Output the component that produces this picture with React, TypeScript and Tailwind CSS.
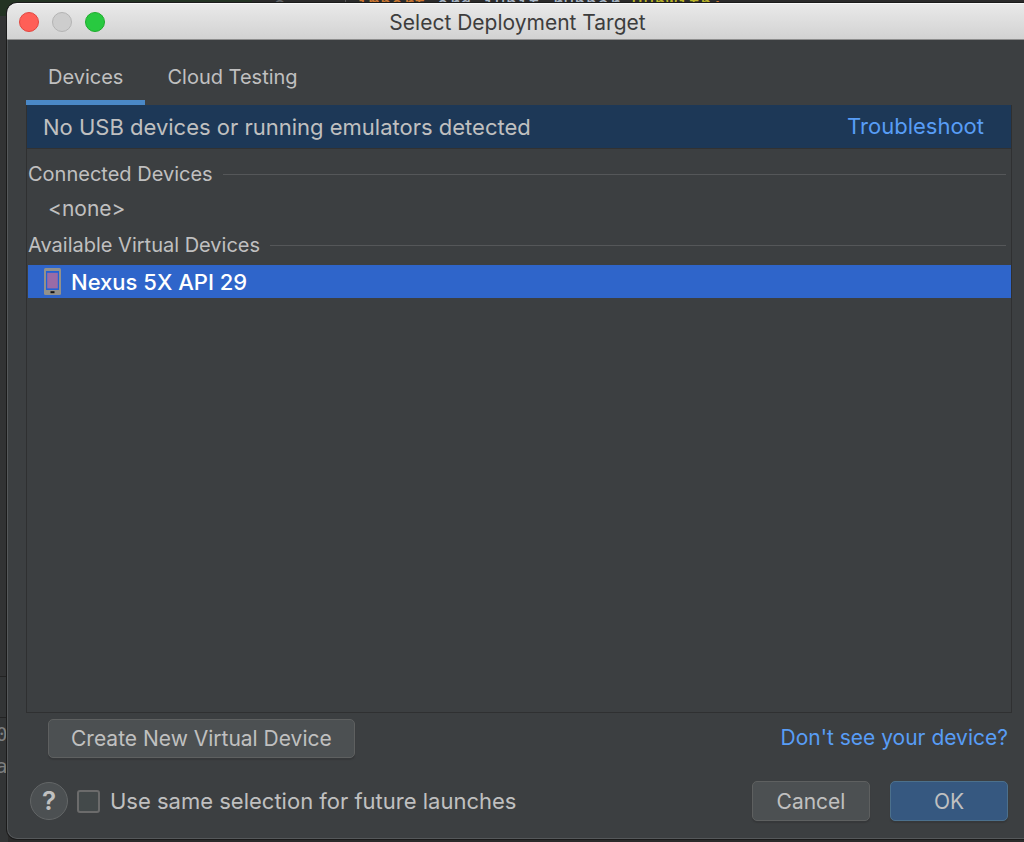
import { useState } from "react";

function SectionHeading({ title }: { title: string }) {
  return (
    <h2 className="flex items-center gap-[10px] pr-[5px] text-xl leading-6">
      {title}
      <span className="h-px flex-1 bg-[#555759]" />
    </h2>
  );
}

function PhoneIcon() {
  return (
    <svg width="17" height="27" viewBox="0 0 17 27" aria-hidden="true">
      <rect width="17" height="27" rx="1.5" fill="#93918b" />
      <rect x="2" y="3" width="13" height="19" fill="#2462d4" />
      <rect x="3.2" y="4.8" width="10.6" height="15.6" fill="#9a6ba6" />
      <rect x="6.5" y="23.2" width="4" height="2" fill="#111" />
    </svg>
  );
}

function EditorBackdrop() {
  return (
    <div
      aria-hidden="true"
      className="absolute inset-0 overflow-hidden bg-[#2b2b2b] font-['DejaVu_Sans_Mono',monospace] text-[19px] leading-6"
    >
      <div className="absolute top-0 left-0 h-4 w-[252px] bg-[#233323]" />
      <div className="absolute top-4 left-0 h-[660px] w-2 bg-[#323334]" />
      <div className="absolute top-[676px] left-0 h-[166px] w-2 border-t border-[#232323] bg-[#333536]" />
      <div className="absolute top-[717px] left-0 h-px w-2 bg-[#232323]" />
      <span className="absolute top-[-5px] left-[274px] text-[#606366]">8</span>
      <div className="absolute top-0 left-[345px] h-4 w-px bg-[#555]" />
      <div className="absolute top-[-8px] left-[357px] whitespace-pre text-[#a9b7c6]">
        <span className="text-[#cc7832]">import</span> org.junit.runner.
        <span className="text-[#bbb529]">RunWith</span>
        <span className="text-[#cc7832]">;</span>
      </div>
      <span className="absolute top-[722px] left-[-4px] text-[#7d7f80]">0</span>
      <span className="absolute top-[754px] left-[-4px] text-[#7d7f80]">a</span>
    </div>
  );
}

export default function App() {
  const [tab, setTab] = useState("Devices");
  const [same, setSame] = useState(false);
  return (
    <div className="relative h-screen min-h-[480px] overflow-hidden pt-[3px] pb-[3px] pl-[7px] font-[Inter,'Liberation_Sans',sans-serif] text-[#c0c0c0]">
      <EditorBackdrop />
      <main className="relative flex h-full flex-col rounded-l-[10px] border-b border-l border-[#55585a] bg-[#3c3f41] shadow-[0_0_0_1px_#1b1b1b]">
        <header className="-ml-px flex h-[37px] shrink-0 items-center rounded-tl-[10px] border-t border-b border-t-[#f8f8f8] border-b-[#8e8e8e] bg-linear-to-b from-[#e9e9e9] to-[#d2d2d2] pr-2 pl-3">
          <div className="flex flex-1 gap-[13px]">
            <button aria-label="Close" className="size-5 rounded-full border border-[#e2463f] bg-[#ff5f57]" />
            <button aria-label="Minimize" disabled className="size-5 rounded-full border border-[#b4b4b4] bg-[#cdcdcd]" />
            <button aria-label="Zoom" className="size-5 rounded-full border border-[#1dad2b] bg-[#28c940]" />
          </div>
          <h1 className="pt-0.5 text-[21px] leading-6 text-[#3d3d3d]">Select Deployment Target</h1>
          <div className="flex-1" />
        </header>

        <div className="flex min-h-0 flex-1 flex-col pr-3 pl-[18px]">
          <nav role="tablist" className="flex h-[65px] shrink-0 text-xl leading-6">
            {["Devices", "Cloud Testing"].map((name) => (
              <button
                key={name}
                role="tab"
                aria-selected={tab === name}
                onClick={() => setTab(name)}
                className={
                  tab === name
                    ? "border-b-[5px] border-[#4a88c7] px-[22px] pt-[14px]"
                    : "border-b-[5px] border-transparent px-[22px] pt-[14px]"
                }
              >
                {name}
              </button>
            ))}
          </nav>

          <section className="flex min-h-0 flex-1 flex-col border border-t-0 border-[#2f3031]">
            <div className="flex h-[44px] shrink-0 items-center justify-between border-b border-[#323232] bg-[#1d3857] pr-[27px] pl-4 text-[22px] leading-7">
              <p>No USB devices or running emulators detected</p>
              <a href="#troubleshoot" className="pb-0.5 text-[#589df6]">Troubleshoot</a>
            </div>
            <div className="flex flex-col pt-[13px] pl-px">
              <SectionHeading title="Connected Devices" />
              <p className="pt-[11px] pb-3 pl-5 text-[21px] leading-6">&lt;none&gt;</p>
              <SectionHeading title="Available Virtual Devices" />
              <button className="mt-2 flex h-[33px] items-center gap-[10px] bg-[#2f65ca] pl-4 text-left text-[22px] leading-7 font-medium text-white">
                <PhoneIcon />
                Nexus 5X API 29
              </button>
            </div>
          </section>

          <div className="flex shrink-0 items-center justify-between pt-[6px] pr-1 pl-[22px] text-[21px] leading-7">
            <button className="h-[39px] rounded-[5px] border border-[#5e6060] bg-[#4c5052] px-[22px] pt-px shadow-[0_2px_1px_#36383a]">
              Create New Virtual Device
            </button>
            <a href="#help" className="pb-0.5 text-[#589df6]">Don't see your device?</a>
          </div>

          <footer className="flex shrink-0 items-center pt-[23px] pr-1 pb-[17px] pl-1 text-[22px] leading-7">
            <button aria-label="Help" className="size-[38px] rounded-full border border-[#636667] bg-[#4c5052] text-[26px] leading-7 font-semibold">
              ?
            </button>
            <label className="flex flex-1 items-center gap-[10px] pl-[9px]">
              <input
                type="checkbox"
                checked={same}
                onChange={() => setSame(!same)}
                className="size-[23px] appearance-none rounded-[3px] border-2 border-[#6b6b6b] bg-[#43494a] checked:bg-[#4a88c7]"
              />
              Use same selection for future launches
            </label>
            <div className="flex gap-5 text-[21px]">
              <button className="h-10 w-[118px] rounded-[5px] border border-[#5e6060] bg-[#4c5052] pt-px shadow-[0_2px_1px_#36383a]">
                Cancel
              </button>
              <button className="h-10 w-[118px] rounded-[5px] border border-[#4c708c] bg-[#365880] pt-px shadow-[0_2px_1px_#36383a]">
                OK
              </button>
            </div>
          </footer>
        </div>
      </main>
    </div>
  );
}
